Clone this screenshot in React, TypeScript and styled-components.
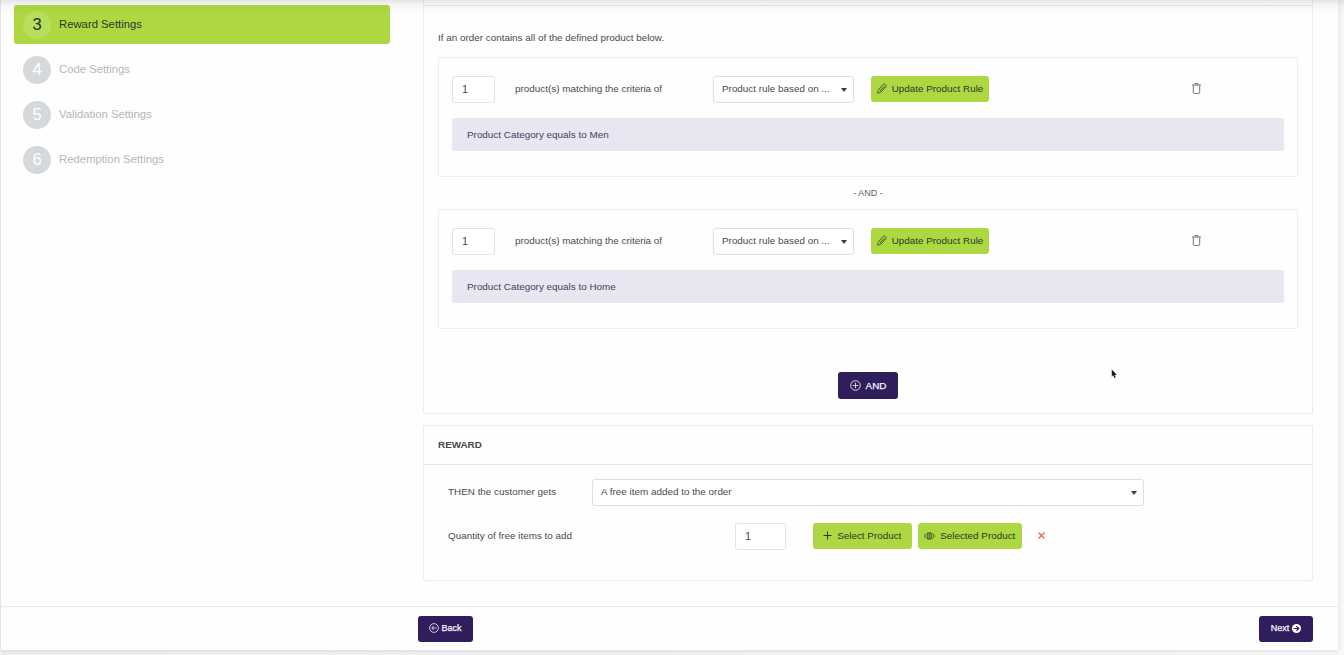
import React from 'react';
import styled, { createGlobalStyle } from 'styled-components';

const GlobalStyle = createGlobalStyle`
  *, *::before, *::after { box-sizing: border-box; }
  body {
    margin: 0;
    background: #f3f3f4;
    font-family: "Liberation Sans", Arial, sans-serif;
    font-size: 9.9px;
    color: #4a4a4e;
    overflow: hidden;
  }
  button, input { font-family: inherit; letter-spacing: inherit; }
`;

const Page = styled.div`
  position: relative;
  height: 655px;
  padding: 0 6px 5px 1px;
  background: linear-gradient(90deg, #f1f1f2 0, #f8f8f9 100%);
`;

const TopShade = styled.div`
  position: absolute;
  inset: 0 0 auto 0;
  height: 16px;
  background: linear-gradient(rgba(60, 50, 70, 0.13), rgba(60, 50, 70, 0.035) 35%, rgba(60, 50, 70, 0));
  pointer-events: none;
`;

const Shell = styled.div`
  height: 650px;
  display: flex;
  flex-direction: column;
  background: #fefefe;
  box-shadow: 0 1px 5px rgba(0, 0, 0, 0.12);
`;

const Body = styled.div`
  height: 606px;
  display: flex;
`;

const Sidebar = styled.nav`
  width: 422px;
  padding: 5px 33px 0 13px;
  display: flex;
  flex-direction: column;
  gap: 6px;
`;

const Step = styled.div<{ $active?: boolean }>`
  height: 39px;
  padding-left: 9px;
  display: flex;
  align-items: center;
  gap: 8px;
  border-radius: 3px;
  font-size: 11.3px;
  background: ${(p) => (p.$active ? '#aed841' : 'transparent')};
  color: ${(p) => (p.$active ? '#28382c' : '#b4b7b8')};
`;

const StepLabel = styled.span`
  padding-bottom: 1px;
`;

const StepNumber = styled.span<{ $active?: boolean }>`
  width: 28px;
  height: 28px;
  border-radius: 50%;
  display: flex;
  align-items: center;
  justify-content: center;
  padding-bottom: 1px;
  font-size: 16.5px;
  background: ${(p) => (p.$active ? '#b9de5c' : '#d5d9dc')};
  color: ${(p) => (p.$active ? '#22302a' : '#fff')};
`;

const Main = styled.main`
  width: 890px;
  display: flex;
  flex-direction: column;
  gap: 12px;
`;

const ConditionCard = styled.section`
  height: 414px;
  padding: 0 14px;
  border: 1px solid #ececee;
  border-top: 0;
  border-radius: 0 0 2px 2px;
`;

const CardRule = styled.div`
  height: 6px;
  margin: 0 -14px;
  border-bottom: 1px solid #e0e6e6;
`;

const Intro = styled.p`
  margin: 0;
  height: 51px;
  padding-top: 13px;
  line-height: 38px;
`;

const RuleBox = styled.div`
  height: 120px;
  padding: 18px 14px 0 13.5px;
  border: 1px solid #eeeef0;
  border-radius: 2px;
`;

const RuleRow = styled.div`
  display: grid;
  grid-template-columns: 43px 178px 141px 118px 1fr;
  column-gap: 20px;
  align-items: start;
  height: 27px;
  margin-left: -0.5px;
  & > :nth-child(4) { margin-left: -3px; }
`;

const RowText = styled.span`
  line-height: 25px;
`;

const NumberInput = styled.input<{ $width: number }>`
  width: ${(p) => p.$width}px;
  height: 27px;
  padding: 0 9px 1px;
  border: 1px solid #e4e4e6;
  border-radius: 2px;
  background: #fff;
  font-size: 10.8px;
  color: #4a4a4e;
  outline: none;
`;

const SelectBox = styled.div<{ $width: number }>`
  width: ${(p) => p.$width}px;
  height: 27px;
  padding: 0 6px 0 8px;
  display: flex;
  align-items: center;
  justify-content: space-between;
  border: 1px solid #dfdfe2;
  border-radius: 3px;
  background: #fff;
  white-space: nowrap;
`;

const SelectText = styled.span`
  padding-bottom: 2px;
`;

const Caret = styled.span`
  border: 3px solid transparent;
  border-top: 4px solid #3e3e42;
  border-bottom: 0;
`;

const GreenButton = styled.button<{ $width: number; $gap?: number }>`
  width: ${(p) => p.$width}px;
  height: 26px;
  padding: 0 0 1px;
  display: flex;
  align-items: center;
  justify-content: center;
  gap: ${(p) => p.$gap ?? 5}px;
  border: 0;
  border-radius: 3px;
  background: #aed841;
  color: #28382c;
  font-size: 9.9px;
  white-space: nowrap;
`;

const TrashButton = styled.button`
  justify-self: start;
  margin: 7px 0 0 180px;
  padding: 0;
  border: 0;
  background: none;
  display: flex;
`;

const RuleSummary = styled.div`
  height: 33px;
  margin: 15px -1px 0 -0.5px;
  padding: 0 15px;
  display: flex;
  align-items: center;
  border-radius: 2px;
  background: #e8e6f1;
  color: #45405c;
`;

const Joiner = styled.div`
  height: 32px;
  display: flex;
  align-items: center;
  justify-content: center;
  font-size: 9px;
  color: #626266;
`;

const AddRow = styled.div`
  display: flex;
  justify-content: center;
  padding-top: 43px;
`;

const PurpleButton = styled.button<{ $width: number; $height: number; $gap: number; $size: number }>`
  width: ${(p) => p.$width}px;
  height: ${(p) => p.$height}px;
  padding: 0 0 1px;
  display: flex;
  align-items: center;
  justify-content: center;
  gap: ${(p) => p.$gap}px;
  border: 0;
  border-radius: 3px;
  background: #301d5b;
  color: #f6f4fa;
  font-size: ${(p) => p.$size}px;
  -webkit-text-stroke: 0.25px currentColor;
`;

const RewardCard = styled.section`
  height: 156px;
  margin-top: -1px;
  border: 1px solid #eeeef0;
  border-radius: 2px;
`;

const RewardTitle = styled.h2`
  margin: 0;
  height: 39px;
  padding: 0 0 1px 14px;
  display: flex;
  align-items: center;
  border-bottom: 1px solid #e4e4e6;
  font-size: 9.9px;
  font-weight: 700;
`;

const Field = styled.div<{ $label: number; $top: number }>`
  display: flex;
  align-items: flex-start;
  height: 27px;
  margin-top: ${(p) => p.$top}px;
  padding-left: 24px;
  & > label {
    width: ${(p) => p.$label}px;
    line-height: 25px;
    white-space: nowrap;
  }
`;

const ButtonGroup = styled.div`
  display: flex;
  align-items: center;
  gap: 6px;
  margin-left: 26.5px;
`;

const ClearIcon = styled.svg`
  margin: -1px 0 0 10.5px;
`;

const Footer = styled.footer`
  height: 44px;
  padding: 0 25px 0 417px;
  display: flex;
  align-items: center;
  justify-content: space-between;
  border-top: 1px solid #ebebed;
`;

const Pointer = styled.svg`
  position: absolute;
  left: 1111px;
  top: 369px;
`;

const PencilIcon = () => (
  <svg width="10" height="11" viewBox="0 0 10 11" fill="none" stroke="currentColor" strokeWidth="0.8" strokeLinejoin="round" strokeLinecap="round">
    <path d="M6.4 1.3 C7.4 .2 9.9 2.1 9 3.5 L3.8 9.2 C3 10 1.7 9.8 .6 10.1 C.9 9 .6 7.9 1.3 7.1Z M7.2 3.4 L3.2 7.8" />
  </svg>
);

const TrashIcon = () => (
  <svg width="9" height="11" viewBox="0 0 9 11" fill="none" stroke="#66666a" strokeWidth="0.9">
    <path d="M0 2 H9 M3 1.8 V.6 H6 V1.8 M1.3 2.2 V9.5 Q1.3 10.4 2.2 10.4 H6.8 Q7.7 10.4 7.7 9.5 V2.2" />
  </svg>
);

const PlusCircleIcon = () => (
  <svg width="11" height="11" viewBox="0 0 11 11" fill="none" stroke="currentColor" strokeWidth="0.85">
    <circle cx="5.5" cy="5.5" r="4.8" />
    <path d="M5.5 2.7 V8.3 M2.7 5.5 H8.3" />
  </svg>
);

const PlusIcon = () => (
  <svg width="9" height="9" viewBox="0 0 9 9" stroke="currentColor" strokeWidth="1">
    <path d="M4.5 .5 V8.5 M.5 4.5 H8.5" />
  </svg>
);

const EyeIcon = () => (
  <svg width="11" height="8" viewBox="0 0 11 8" fill="none" stroke="currentColor" strokeWidth="0.8">
    <path d="M.5 4 C2.5 -.3 8.5 -.3 10.5 4 C8.5 8.3 2.5 8.3 .5 4Z" />
    <circle cx="5.5" cy="4" r="2.3" />
    <circle cx="5.5" cy="4" r=".7" />
  </svg>
);

const BackIcon = () => (
  <svg width="10" height="10" viewBox="0 0 10 10" fill="none" stroke="currentColor" strokeWidth="0.8">
    <circle cx="5" cy="5" r="4.4" />
    <path d="M7.6 5 H2.8 M4.8 2.9 L2.7 5 L4.8 7.1" />
  </svg>
);

const NextIcon = () => (
  <svg width="9" height="9" viewBox="0 0 9 9" fill="none">
    <circle cx="4.5" cy="4.5" r="4.5" fill="#fff" />
    <path d="M1.8 4.5 H6.6 M4.4 2.1 L6.8 4.5 L4.4 6.9" stroke="#301d5b" strokeWidth="1.2" />
  </svg>
);

const steps = [
  { n: 3, label: 'Reward Settings' },
  { n: 4, label: 'Code Settings' },
  { n: 5, label: 'Validation Settings' },
  { n: 6, label: 'Redemption Settings' },
];

const ProductRule = ({ category }: { category: string }) => (
  <RuleBox>
    <RuleRow>
      <NumberInput $width={43} defaultValue="1" />
      <RowText>product(s) matching the criteria of</RowText>
      <SelectBox $width={141}>
        <SelectText>Product rule based on ...</SelectText>
        <Caret />
      </SelectBox>
      <GreenButton $width={118}>
        <PencilIcon />
        Update Product Rule
      </GreenButton>
      <TrashButton aria-label="Delete rule">
        <TrashIcon />
      </TrashButton>
    </RuleRow>
    <RuleSummary>Product Category equals to {category}</RuleSummary>
  </RuleBox>
);

export default function App() {
  return (
    <Page>
      <GlobalStyle />
      <Shell>
        <Body>
          <Sidebar>
            {steps.map((s) => (
              <Step key={s.n} $active={s.n === 3}>
                <StepNumber $active={s.n === 3}>{s.n}</StepNumber>
                <StepLabel>{s.label}</StepLabel>
              </Step>
            ))}
          </Sidebar>
          <Main>
            <ConditionCard>
              <CardRule />
              <Intro>If an order contains all of the defined product below.</Intro>
              <ProductRule category="Men" />
              <Joiner>- AND -</Joiner>
              <ProductRule category="Home" />
              <AddRow>
                <PurpleButton $width={60} $height={27} $gap={5} $size={9.9}>
                  <PlusCircleIcon />
                  AND
                </PurpleButton>
              </AddRow>
            </ConditionCard>
            <RewardCard>
              <RewardTitle>REWARD</RewardTitle>
              <Field $label={144} $top={14}>
                <label>THEN the customer gets</label>
                <SelectBox $width={552}>
                  <SelectText>A free item added to the order</SelectText>
                  <Caret />
                </SelectBox>
              </Field>
              <Field $label={287} $top={17}>
                <label>Quantity of free items to add</label>
                <NumberInput $width={51} defaultValue="1" />
                <ButtonGroup>
                  <GreenButton $width={99.5}>
                    <PlusIcon />
                    Select Product
                  </GreenButton>
                  <GreenButton $width={103.5}>
                    <EyeIcon />
                    Selected Product
                  </GreenButton>
                  <ClearIcon width="7" height="7" viewBox="0 0 7 7" stroke="#e8623c" strokeWidth="1.1">
                    <path d="M.5 .5 L6.5 6.5 M6.5 .5 L.5 6.5" />
                  </ClearIcon>
                </ButtonGroup>
              </Field>
            </RewardCard>
          </Main>
        </Body>
        <Footer>
          <PurpleButton $width={55} $height={26} $gap={2} $size={9}>
            <BackIcon />
            Back
          </PurpleButton>
          <PurpleButton $width={54} $height={26} $gap={3} $size={9}>
            Next
            <NextIcon />
          </PurpleButton>
        </Footer>
      </Shell>
      <TopShade />
      <Pointer width="7" height="10" viewBox="0 0 7 10">
        <path d="M.7 .3 V7.8 L2.3 6.4 L3.4 9.2 L4.9 8.6 L3.8 5.9 H6.1Z" fill="#111" stroke="#fff" strokeWidth=".3" />
      </Pointer>
    </Page>
  );
}
